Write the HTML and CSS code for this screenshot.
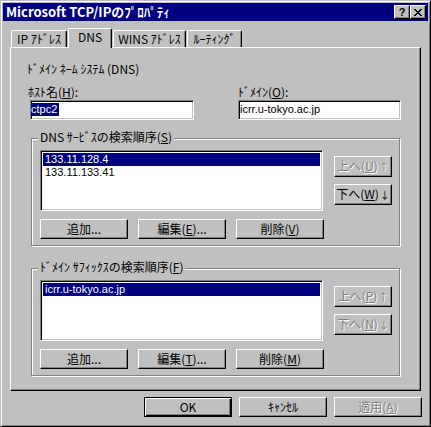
FILE: index.html
```html
<!DOCTYPE html>
<html lang="ja">
<head>
  <meta charset="UTF-8">
  <title>Microsoft TCP/IPのﾌﾟﾛﾊﾟﾃｨ</title>
  <link rel="stylesheet" href="styles.css">
</head>
<body>
  <div class="window">
    <div class="titlebar">
      <span class="title">Microsoft TCP/IPのﾌﾟﾛﾊﾟﾃｨ</span>
      <div class="caption-buttons">
        <button type="button" class="cap-btn cap-help">?</button>
        <button type="button" class="cap-btn">
          <svg width="8" height="7" viewBox="0 0 8 7" shape-rendering="crispEdges">
            <path d="M0 0h2v1H0z M6 0h2v1H6z M1 1h2v1H1z M5 1h2v1H5z M2 2h4v1H2z M3 3h2v1H3z M2 4h4v1H2z M1 5h2v1H1z M5 5h2v1H5z M0 6h2v1H0z M6 6h2v1H6z" fill="#000"/>
          </svg>
        </button>
      </div>
    </div>

    <!-- Tabs -->
    <div class="tabs">
      <div class="tab tab-ip">IP ｱﾄﾞﾚｽ</div>
      <div class="tab tab-dns tab-active">DNS</div>
      <div class="tab tab-wins">WINS ｱﾄﾞﾚｽ</div>
      <div class="tab tab-route">ﾙｰﾃｨﾝｸﾞ</div>
    </div>

    <div class="panel">
      <div class="section-label">ﾄﾞﾒｲﾝ ﾈｰﾑ ｼｽﾃﾑ (DNS)</div>

      <div class="field-row">
        <div class="field field-host">
          <div class="field-label">ﾎｽﾄ名(<u>H</u>):</div>
          <div class="textbox latin"><span class="sel">ctpc2</span></div>
        </div>
        <div class="field field-domain">
          <div class="field-label">ﾄﾞﾒｲﾝ(<u>O</u>):</div>
          <div class="textbox latin">icrr.u-tokyo.ac.jp</div>
        </div>
      </div>

      <!-- DNS server order -->
      <div class="group">
        <div class="group-label">DNS ｻｰﾋﾞｽの検索順序(<u>S</u>)</div>
        <div class="group-body">
          <div class="list-col">
            <div class="listbox latin">
              <div class="list-item list-item-sel">133.11.128.4</div>
              <div class="list-item">133.11.133.41</div>
            </div>
            <div class="btn-row">
              <button type="button" class="btn">追加...</button>
              <button type="button" class="btn">編集(<u>E</u>)...</button>
              <button type="button" class="btn">削除(<u>V</u>)</button>
            </div>
          </div>
          <div class="side-col">
            <button type="button" class="btn btn-side" disabled>上へ(<u>U</u>)<span class="arrow">↑</span></button>
            <button type="button" class="btn btn-side">下へ(<u>W</u>)<span class="arrow">↓</span></button>
          </div>
        </div>
      </div>

      <!-- Domain suffix order -->
      <div class="group">
        <div class="group-label">ﾄﾞﾒｲﾝ ｻﾌｨｯｸｽの検索順序(<u>F</u>)</div>
        <div class="group-body">
          <div class="list-col">
            <div class="listbox latin">
              <div class="list-item list-item-sel">icrr.u-tokyo.ac.jp</div>
            </div>
            <div class="btn-row">
              <button type="button" class="btn">追加...</button>
              <button type="button" class="btn">編集(<u>T</u>)...</button>
              <button type="button" class="btn">削除(<u>M</u>)</button>
            </div>
          </div>
          <div class="side-col">
            <button type="button" class="btn btn-side" disabled>上へ(<u>P</u>)<span class="arrow">↑</span></button>
            <button type="button" class="btn btn-side" disabled>下へ(<u>N</u>)<span class="arrow">↓</span></button>
          </div>
        </div>
      </div>
    </div>

    <div class="footer">
      <button type="button" class="btn btn-default">OK</button>
      <button type="button" class="btn">ｷｬﾝｾﾙ</button>
      <button type="button" class="btn" disabled>適用(<u>A</u>)</button>
    </div>
  </div>
</body>
</html>
```

FILE: styles.css
```css
body {
  margin: 0;
  background: #c0c0c0;
  font-family: "Noto Sans CJK JP", "Liberation Sans", sans-serif;
  font-size: 12px;
  color: #000;
}

/* latin-only runs: narrower face, closer to the bitmap system font */
.latin {
  font-family: "Liberation Sans", "Noto Sans CJK JP", sans-serif;
  font-size: 11px;
}

.window {
  width: 431px;
  height: 427px;
  box-sizing: border-box;
  padding: 2px;
  border: 1px solid;
  border-color: #c0c0c0 #000 #000 #c0c0c0;
  box-shadow: inset 1px 1px #fff, inset -1px -1px #808080;
  background: #c0c0c0;
}

/* title bar */
.titlebar {
  height: 18px;
  display: flex;
  align-items: center;
  justify-content: space-between;
  padding: 0 2px 0 3px;
  background: #000080;
  color: #fff;
}

.title {
  font-weight: bold;
  font-size: 13px;
  line-height: 18px;
}

.caption-buttons {
  display: flex;
}

.cap-btn {
  width: 16px;
  height: 14px;
  box-sizing: border-box;
  display: flex;
  align-items: center;
  justify-content: center;
  padding: 0;
  border: 1px solid;
  border-color: #fff #000 #000 #fff;
  box-shadow: inset -1px -1px #808080;
  background: #c0c0c0;
  color: #000;
}

.cap-help {
  font-family: "Liberation Sans", sans-serif;
  font-weight: bold;
  font-size: 11px;
  line-height: 11px;
}

/* tabs */
.tabs {
  display: flex;
  align-items: flex-end;
  gap: 1px;
  height: 19px;
  margin-top: 7px;
  padding-left: 8px;
}

.tab {
  height: 17px;
  box-sizing: border-box;
  border: 1px solid;
  border-color: #fff #000 transparent #fff;
  border-bottom: none;
  border-radius: 2px 2px 0 0;
  box-shadow: inset -1px 0 #808080;
  text-align: center;
  line-height: 15px;
  background: #c0c0c0;
}

.tab-ip { width: 56px; }
.tab-dns { width: 44px; }
.tab-wins { width: 73px; }
.tab-route { width: 55px; }

.tab-active {
  position: relative;
  z-index: 1;
  height: 20px;
  margin-bottom: -1px;
}

/* tab page */
.panel {
  width: 411px;
  height: 344px;
  box-sizing: border-box;
  margin-left: 7px;
  padding: 14px 0 0 19px;
  border: 1px solid;
  border-color: #fff #000 #000 #fff;
  box-shadow: inset -1px -1px #808080;
}

.section-label {
  line-height: 14px;
  margin-left: -3px;
}

.field-row {
  display: flex;
  gap: 44px;
  margin-top: 9px;
}

.field-host { width: 164px; }
.field-domain { width: 163px; }

.field-label {
  line-height: 14px;
}

.field-host .field-label {
  margin-left: -2px;
}

.textbox {
  height: 20px;
  box-sizing: border-box;
  margin-top: 1px;
  padding: 2px 1px 0 1px;
  border: 1px solid;
  border-color: #808080 #fff #fff #808080;
  box-shadow: inset 1px 1px #000, inset -1px -1px #c0c0c0;
  background: #fff;
  line-height: 13px;
  white-space: nowrap;
}

.sel {
  display: inline-block;
  margin-left: -1px;
  padding-right: 2px;
  background: #000080;
  color: #fff;
  line-height: 13px;
}

/* group boxes */
.group {
  width: 369px;
  box-sizing: border-box;
  margin: 18px 0 0 1px;
  padding: 0 8px 6px 8px;
  border: 1px solid #808080;
  box-shadow: inset 1px 1px #fff, 1px 1px #fff;
}

.group + .group {
  margin-top: 22px;
}

.group-label {
  width: fit-content;
  margin: -9px 0 0 -2px;
  padding: 0 2px;
  background: #c0c0c0;
  line-height: 14px;
}

.group-body {
  display: flex;
  gap: 10px;
  margin-top: 6px;
}

.listbox {
  width: 283px;
  height: 61px;
  box-sizing: border-box;
  padding: 2px;
  border: 1px solid;
  border-color: #808080 #fff #fff #808080;
  box-shadow: inset 1px 1px #000, inset -1px -1px #c0c0c0;
  background: #fff;
}

.list-item {
  padding-left: 2px;
  line-height: 13px;
}

.list-item-sel {
  background: #000080;
  color: #fff;
}

.btn-row {
  display: flex;
  gap: 10px;
  margin-top: 8px;
}

.side-col {
  display: flex;
  flex-direction: column;
  gap: 7px;
  padding-top: 6px;
}

/* buttons */
.btn {
  width: 88px;
  height: 20px;
  box-sizing: border-box;
  padding: 0;
  border: 1px solid;
  border-color: #fff #000 #000 #fff;
  box-shadow: inset -1px -1px #808080;
  background: #c0c0c0;
  font: inherit;
  line-height: 16px;
  color: #000;
  white-space: nowrap;
}

.btn:disabled {
  color: #808080;
  text-shadow: 1px 1px #fff;
}

.btn-side {
  width: 58px;
  height: 21px;
}

.arrow {
  font-size: 10px;
  margin-left: 1px;
}

.btn-default {
  border-color: #000;
  box-shadow: inset 1px 1px #fff, inset -1px -1px #000, inset -2px -2px #808080;
}

.footer {
  display: flex;
  justify-content: flex-end;
  gap: 7px;
  margin-top: 6px;
  padding-right: 6px;
}
```
